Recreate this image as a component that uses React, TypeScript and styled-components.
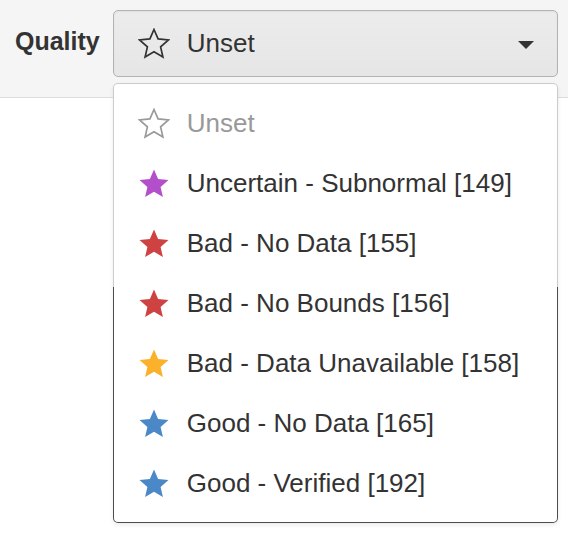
import React from "react";
import styled, { createGlobalStyle } from "styled-components";

const GlobalStyle = createGlobalStyle`
  html, body {
    margin: 0;
    padding: 0;
    background: #ffffff;
    font-family: "Liberation Sans", Arial, Helvetica, sans-serif;
    color: #333333;
  }
`;

const Page = styled.div`
  width: 568px;
  height: 534px;
  background: #ffffff;
  overflow: hidden;
`;

const Header = styled.div`
  box-sizing: border-box;
  height: 98px;
  background: #f5f5f5;
  border-bottom: 1px solid #dddddd;
  padding: 10px 10px 0 15px;
  display: flex;
  align-items: flex-start;
`;

const FieldRow = styled.div`
  display: flex;
  align-items: center;
  gap: 13px;
  width: 100%;
  height: 67px;
`;

const Label = styled.div`
  font-size: 25px;
  font-weight: 700;
  color: #333333;
  margin-top: -4px;
`;

const SelectWrap = styled.div`
  position: relative;
  flex: 1;
  height: 67px;
`;

const SelectButton = styled.div`
  box-sizing: border-box;
  height: 67px;
  border: 1px solid #b3b3b3;
  border-radius: 5px;
  background: linear-gradient(#ececec, #e6e6e6);
  box-shadow: inset 0 1px 2px rgba(0, 0, 0, 0.06);
  display: flex;
  align-items: center;
  padding: 0 23px 0 24px;
  gap: 17px;
`;

const ValueText = styled.span<{ $muted?: boolean }>`
  font-size: 26px;
  color: ${(p) => (p.$muted ? "#999999" : "#333333")};
  white-space: nowrap;
`;

const Caret = styled.span`
  margin-left: auto;
  width: 0;
  height: 0;
  border-left: 8px solid transparent;
  border-right: 8px solid transparent;
  border-top: 8px solid #333333;
  margin-top: 2px;
`;

const MenuFrame = styled.div`
  position: absolute;
  top: 73px;
  left: 0;
  right: 0;
  padding: 1px;
  border-radius: 5px;
  background: linear-gradient(to bottom, #cccccc 0, #cccccc 204px, #4d4d4d 204px, #4d4d4d 100%);
  box-shadow: 0 2px 4px rgba(0, 0, 0, 0.08);
`;

const Menu = styled.div`
  background: #ffffff;
  border-radius: 4px;
  padding: 9px 0 9px;
`;

const Item = styled.div`
  height: 60px;
  display: flex;
  align-items: center;
  padding-left: 24px;
  gap: 17px;
`;

const StarSvg = styled.svg`
  flex: none;
  display: block;
`;

const STAR =
  "16 1.5 20.1 10.9 30.5 11.9 22.6 18.9 24.9 29 16 23.8 7.1 29 9.4 18.9 1.5 11.9 11.9 10.9";

function Star({ color, outline }: { color: string; outline?: boolean }) {
  return (
    <StarSvg width="32" height="31" viewBox="0 0 32 31">
      {outline ? (
        <polygon
          points={STAR}
          fill="none"
          stroke={color}
          strokeWidth="1.7"
          strokeLinejoin="miter"
        />
      ) : (
        <polygon points={STAR} fill={color} />
      )}
    </StarSvg>
  );
}

const options = [
  { label: "Uncertain - Subnormal [149]", color: "#b44fcb" },
  { label: "Bad - No Data [155]", color: "#cf4242" },
  { label: "Bad - No Bounds [156]", color: "#cf4242" },
  { label: "Bad - Data Unavailable [158]", color: "#fbb12a" },
  { label: "Good - No Data [165]", color: "#4a88c8" },
  { label: "Good - Verified [192]", color: "#4a88c8" },
];

export default function App() {
  return (
    <Page>
      <GlobalStyle />
      <Header>
        <FieldRow>
          <Label>Quality</Label>
          <SelectWrap>
            <SelectButton>
              <Star color="#333333" outline />
              <ValueText>Unset</ValueText>
              <Caret />
            </SelectButton>
            <MenuFrame>
              <Menu>
                <Item>
                  <Star color="#9a9a9a" outline />
                  <ValueText $muted>Unset</ValueText>
                </Item>
                {options.map((o) => (
                  <Item key={o.label}>
                    <Star color={o.color} />
                    <ValueText>{o.label}</ValueText>
                  </Item>
                ))}
              </Menu>
            </MenuFrame>
          </SelectWrap>
        </FieldRow>
      </Header>
    </Page>
  );
}
